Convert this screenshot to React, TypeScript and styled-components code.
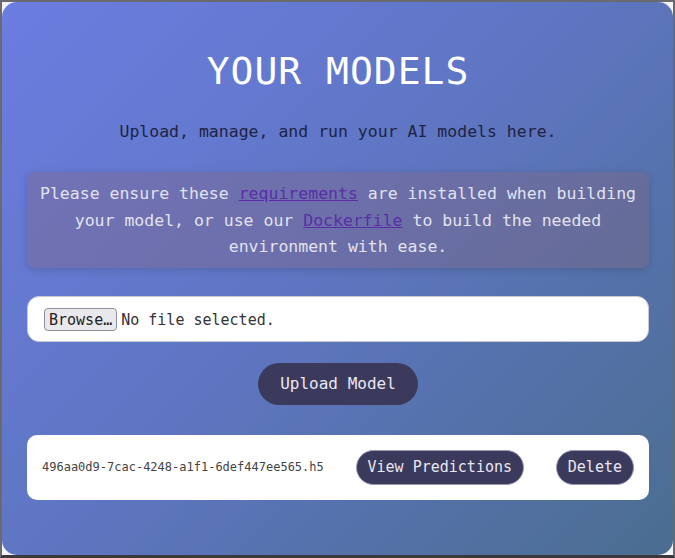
import React from 'react';
import styled, { createGlobalStyle } from 'styled-components';

const GlobalStyle = createGlobalStyle`
  html, body {
    margin: 0;
    padding: 0;
    background: #f4f4f6;
  }
  * {
    box-sizing: border-box;
  }
`;

const mono = `"DejaVu Sans Mono", "Liberation Mono", monospace`;

const Frame = styled.div`
  height: 558px;
  border: 2px solid #6a6a6e;
  border-bottom: 3px solid #3a3a3e;
  background: #f4f4f6;
`;

const Card = styled.main`
  height: 100%;
  display: flex;
  flex-direction: column;
  padding: 46px 24px 0 25px;
  border-radius: 15px;
  background: linear-gradient(135deg, #6b7de1 0%, #5f76c4 45%, #4b6d90 100%);
  font-family: ${mono};
`;

const Title = styled.h1`
  margin: 0;
  font-size: 38px;
  line-height: 46px;
  font-weight: normal;
  letter-spacing: 1px;
  color: #ffffff;
  text-align: center;
`;

const Subtitle = styled.p`
  margin: 26px 0 0;
  font-size: 16.5px;
  line-height: 24px;
  color: #1e2342;
  text-align: center;
`;

const Notice = styled.div`
  margin-top: 28px;
  padding: 9px 12px 7px;
  border-radius: 8px;
  background: rgba(140, 95, 110, 0.3);
  box-shadow: 0 2px 8px rgba(0, 0, 0, 0.15);
  color: #e2e2f0;
  font-size: 16.5px;
  line-height: 26.5px;
  text-align: center;

  a {
    color: #5a2ea6;
    text-decoration: underline;
  }
`;

const FileField = styled.div`
  margin-top: 28px;
  height: 46px;
  display: flex;
  align-items: center;
  gap: 4px;
  padding: 2px 16px 0;
  background: #ffffff;
  border: 1px solid #c9c9d2;
  border-radius: 12px;
  font-size: 15px;
  color: #333;
`;

const BrowseButton = styled.button`
  height: 23px;
  padding: 0 4px;
  background: #e9e9ed;
  border: 1px solid #8f8f9d;
  border-radius: 4px;
  font-family: ${mono};
  font-size: 15px;
  color: #222;
`;

const PillButton = styled.button<{ $size?: 'lg' | 'sm' }>`
  height: ${(p) => (p.$size === 'lg' ? '42px' : '35px')};
  padding: 0 ${(p) => (p.$size === 'lg' ? '22px' : '11px')};
  border-radius: 21px;
  border: ${(p) => (p.$size === 'lg' ? 'none' : '1px solid #9a9ab2')};
  background: #3c3a5c;
  color: #e8e8f2;
  font-family: ${mono};
  font-size: ${(p) => (p.$size === 'lg' ? '16px' : '15px')};
  cursor: pointer;
`;

const UploadButton = styled(PillButton)`
  margin-top: 21px;
  align-self: center;
`;

const ModelRow = styled.div`
  margin-top: 30px;
  height: 65px;
  display: flex;
  align-items: center;
  justify-content: space-between;
  padding: 0 15px;
  background: #ffffff;
  border-radius: 10px;
`;

const FileName = styled.span`
  font-size: 12px;
  color: #444;
`;

const models = ['496aa0d9-7cac-4248-a1f1-6def447ee565.h5'];

export default function App() {
  return (
    <>
      <GlobalStyle />
      <Frame>
        <Card>
          <Title>YOUR MODELS</Title>
          <Subtitle>Upload, manage, and run your AI models here.</Subtitle>
          <Notice>
            Please ensure these <a href="#">requirements</a> are installed when building
            your model, or use our <a href="#">Dockerfile</a> to build the needed
            environment with ease.
          </Notice>
          <FileField>
            <BrowseButton>Browse…</BrowseButton>
            <span>No file selected.</span>
          </FileField>
          <UploadButton $size="lg">Upload Model</UploadButton>
          {models.map((m) => (
            <ModelRow key={m}>
              <FileName>{m}</FileName>
              <PillButton>View Predictions</PillButton>
              <PillButton>Delete</PillButton>
            </ModelRow>
          ))}
        </Card>
      </Frame>
    </>
  );
}
